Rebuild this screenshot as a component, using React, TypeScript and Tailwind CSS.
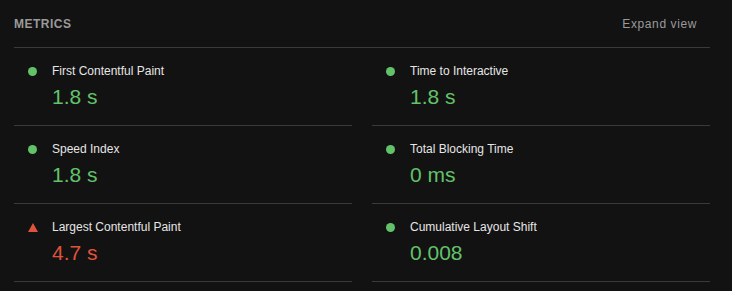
import React from "react";

type Metric = { label: string; value: string; status: "pass" | "fail" };

const left: Metric[] = [
  { label: "First Contentful Paint", value: "1.8 s", status: "pass" },
  { label: "Speed Index", value: "1.8 s", status: "pass" },
  { label: "Largest Contentful Paint", value: "4.7 s", status: "fail" },
];
const right: Metric[] = [
  { label: "Time to Interactive", value: "1.8 s", status: "pass" },
  { label: "Total Blocking Time", value: "0 ms", status: "pass" },
  { label: "Cumulative Layout Shift", value: "0.008", status: "pass" },
];

function Row({ m }: { m: Metric }) {
  const pass = m.status === "pass";
  return (
    <div className="border-b border-[#3a3a3a] pt-[14px] pb-[16px]">
      <div className="flex items-center h-[18px]">
        <div className="w-[38px] flex items-center pl-[14px]">
          {pass ? (
            <span className="block w-[9px] h-[9px] rounded-full bg-[#62c26a]" />
          ) : (
            <svg width="10" height="9" viewBox="0 0 10 9" className="block">
              <polygon points="5,0 10,9 0,9" fill="#e0533b" />
            </svg>
          )}
        </div>
        <span className="text-[12px] leading-[18px] text-[#e6e6e6]">{m.label}</span>
      </div>
      <div
        className={
          "mt-[5px] pl-[38px] text-[21px] leading-[24px] " +
          (pass ? "text-[#62c26a]" : "text-[#e0533b]")
        }
      >
        {m.value}
      </div>
    </div>
  );
}

export default function App() {
  return (
    <div
      className="w-[732px] h-[291px] bg-[#121212] pl-[14px] pr-[22px]"
      style={{ fontFamily: '"Liberation Sans", Arial, sans-serif' }}
    >
      <div className="flex items-center justify-between pt-[16px] pb-[15px] border-b border-[#3a3a3a] h-[48px] box-border">
        <span className="text-[12px] leading-[16px] font-bold tracking-[0.5px] text-[#9a9a9a]">
          METRICS
        </span>
        <span className="text-[12px] leading-[16px] tracking-[0.6px] text-[#9a9a9a] mr-[13px]">
          Expand view
        </span>
      </div>
      <div className="grid grid-cols-2 gap-x-[20px]">
        <div>
          {left.map((m) => (
            <Row key={m.label} m={m} />
          ))}
        </div>
        <div>
          {right.map((m) => (
            <Row key={m.label} m={m} />
          ))}
        </div>
      </div>
    </div>
  );
}
